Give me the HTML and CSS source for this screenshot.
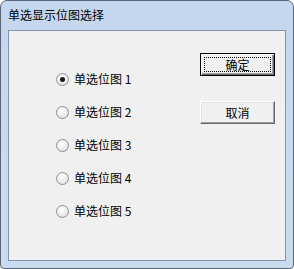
FILE: index.html
```html
<!DOCTYPE html>
<html lang="zh">
<head>
    <meta charset="UTF-8">
    <title>单选显示位图选择</title>
    <link rel="stylesheet" href="styles.css">
</head>
<body>
    <div class="window">
        <div class="titlebar">单选显示位图选择</div>
        <div class="client">
            <div class="options">
                <div class="option"><span class="radio checked"></span>单选位图 1</div>
                <div class="option"><span class="radio"></span>单选位图 2</div>
                <div class="option"><span class="radio"></span>单选位图 3</div>
                <div class="option"><span class="radio"></span>单选位图 4</div>
                <div class="option"><span class="radio"></span>单选位图 5</div>
            </div>
            <div class="buttons">
                <button class="btn default"><span class="focus">确定</span></button>
                <button class="btn">取消</button>
            </div>
        </div>
    </div>
</body>
</html>
```

FILE: styles.css
```css
* {
    margin: 0;
    padding: 0;
    box-sizing: border-box;
}

body {
    font-family: "Noto Sans CJK SC", "DejaVu Sans", sans-serif;
    font-size: 12px;
    background: #ffffff;
    width: 294px;
    height: 269px;
}

.window {
    width: 294px;
    height: 269px;
    border: 1px solid #5a6577;
    border-radius: 7px 7px 4px 4px;
    background: linear-gradient(180deg, #c4d7ee 0%, #c9dcef 100%);
    display: flex;
    flex-direction: column;
    overflow: hidden;
}

.titlebar {
    height: 29px;
    padding: 6px 0 0 7px;
    color: #000;
    font-size: 12px;
    line-height: 16px;
}

.client {
    flex: 1;
    margin: 0 7px 7px 7px;
    border: 1px solid #8293a9;
    background: #f0f0f0;
    display: flex;
}

.options {
    padding: 38px 0 0 47px;
    display: flex;
    flex-direction: column;
}

.option {
    height: 33px;
    display: flex;
    align-items: flex-start;
    color: #000;
    line-height: 20px;
}

.radio {
    width: 13px;
    height: 13px;
    margin: 4px 5px 0 0;
    border-radius: 50%;
    border: 1px solid #8e8f8f;
    background: radial-gradient(circle at 40% 35%, #ffffff 0%, #e9e9e9 60%, #d4d4d4 100%);
    position: relative;
}

.radio.checked::after {
    content: '';
    position: absolute;
    left: 3px;
    top: 3px;
    width: 5px;
    height: 5px;
    border-radius: 50%;
    background: #1a1a1a;
}

.buttons {
    margin-left: auto;
    margin-right: 10px;
    padding-top: 22px;
    display: flex;
    flex-direction: column;
    gap: 25px;
}

.btn {
    width: 75px;
    height: 23px;
    font-family: inherit;
    font-size: 12px;
    color: #000;
    background: #f0f0f0;
    border: 1px solid;
    border-color: #ffffff #696969 #696969 #ffffff;
    box-shadow: inset -1px -1px 0 #a0a0a0, inset 1px 1px 0 #e3e3e3;
}

.btn.default {
    border: 1px solid #000;
    box-shadow: inset 1px 1px 0 #ffffff, inset -1px -1px 0 #696969, inset -2px -2px 0 #a0a0a0;
    padding: 3px;
}

.focus {
    display: block;
    height: 100%;
    border: 1px dotted #000;
    line-height: 13px;
}
```
